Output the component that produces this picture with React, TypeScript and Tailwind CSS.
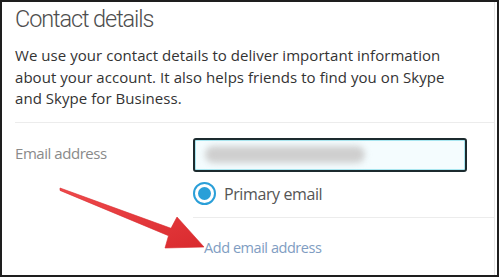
import React from "react";

export default function App() {
  return (
    <div className="relative w-[499px] h-[277px] overflow-hidden bg-white border-2 border-[#1e1e1e] font-['Open_Sans','Noto_Sans',sans-serif]">
      <div className="h-full w-[493px] border-r border-[#e6e6e6] pl-[13px] flex flex-col">
        <div className="mt-[1px] h-[32px] text-[23.5px] leading-[32px] font-light text-[#4e4e4e] tracking-[-1.1px] font-['Roboto',sans-serif]">
          Contact details
        </div>
        <div className="mt-[10px] text-[15px] leading-[21.5px] text-[#333] tracking-[0.05px]">
          <div>We use your contact details to deliver important information</div>
          <div>about your account. It also helps friends to find you on Skype</div>
          <div>and Skype for Business.</div>
        </div>
        <div className="mt-[12px] h-px bg-[#ececec]" />
        <div className="flex mt-[15px]">
          <div className="w-[178px] pt-[4px] text-[15px] leading-[22px] text-[#8a8a8a] tracking-[-0.45px]">
            Email address
          </div>
          <div className="flex-1 flex flex-col">
            <div className="w-[274px] h-[34px] rounded-[3px] border-2 border-[#1c2a2e] bg-[#f4fcfe] shadow-[inset_0_0_0_1px_#a8e6f0] flex items-center pl-[10px]">
              <div className="w-[160px] h-[17px] rounded-full bg-[#cfcfcf] blur-[3px]" />
            </div>
            <div className="mt-[10px] flex items-center h-[24px]">
              <div className="w-[23px] h-[23px] rounded-full border-2 border-[#2a9fd8] flex items-center justify-center">
                <div className="w-[13px] h-[13px] rounded-full bg-[#2a9fd8]" />
              </div>
              <span className="ml-[8px] text-[16px] leading-[22px] text-[#555] tracking-[-0.4px]">
                Primary email
              </span>
            </div>
            <div className="mt-[11px] h-px bg-[#ececec]" />
            <div className="mt-[19px] pl-[11px] text-[14.5px] leading-[22px] text-[#809dc2] tracking-[-0.45px]">
              Add email address
            </div>
          </div>
        </div>
      </div>
      <svg
        className="absolute left-[-2px] top-[-2px]"
        width="499"
        height="277"
        viewBox="0 0 499 277"
      >
        <defs>
          <linearGradient id="ar" x1="0" y1="0" x2="1" y2="1">
            <stop offset="0" stopColor="#f04a4c" />
            <stop offset="1" stopColor="#d92a2e" />
          </linearGradient>
        </defs>
        <polygon
          points="60,188 171,228.3 177,217 204,247 165,248 168.5,235.7 60,190.4"
          fill="url(#ar)"
          stroke="#d8282c"
          strokeWidth="0.6"
          strokeLinejoin="round"
        />
      </svg>
    </div>
  );
}
